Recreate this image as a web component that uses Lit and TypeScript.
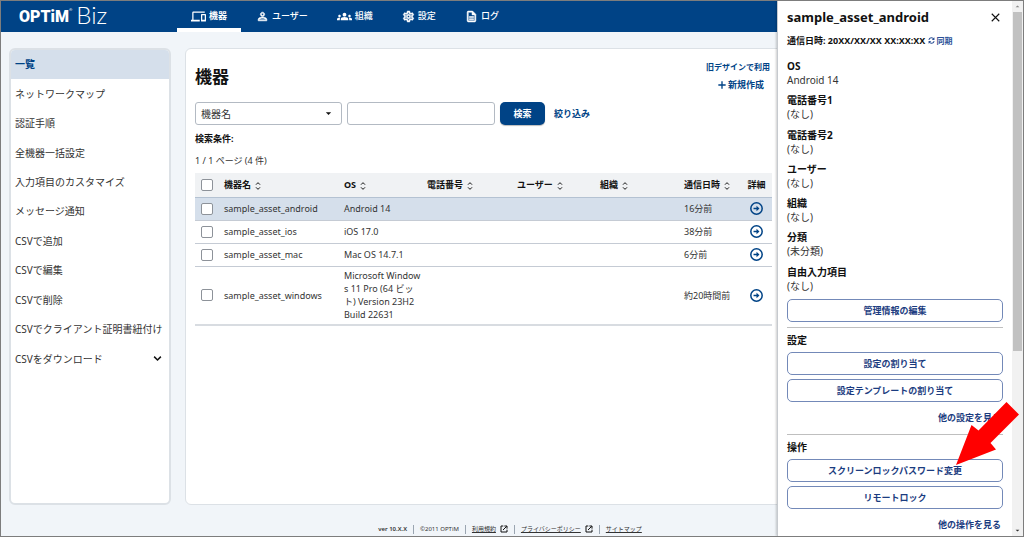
import { LitElement, html, css, svg } from "lit";
import { customElement, property } from "lit/decorators.js";
import { classMap } from "lit/directives/class-map.js";

const icons: Record<string, unknown> = {
  devices: svg`<path d="M4 6h18V4H4c-1.100 0-2 .9-2 2v11H0v3h14v-3H4V6zm19 2h-6c-.55 0-1 .45-1 1v10c0 .55.45 1 1 1h6c.55 0 1-.45 1-1V9c0-.55-.45-1-1-1zm-1 9h-4v-7h4v7z"/>`,
  person: svg`<path d="M12 6c1.100 0 2 .9 2 2s-.9 2-2 2-2-.9-2-2 .9-2 2-2m0 9c2.700 0 5.800 1.290 6 2v1H6v-.99c.2-.72 3.300-2.010 6-2.010m0-11C9.790 4 8 5.790 8 8s1.790 4 4 4 4-1.790 4-4-1.790-4-4-4zm0 9c-2.670 0-8 1.340-8 4v3h16v-3c0-2.660-5.330-4-8-4z" stroke="currentColor"/>`,
  groups: svg`<path d="M12 12.750c1.630 0 3.070.39 4.240.9 1.080.48 1.760 1.560 1.760 2.730V18H6v-1.610c0-1.180.68-2.260 1.760-2.730 1.170-.52 2.610-.91 4.240-.91zM4 13c1.100 0 2-.9 2-2s-.9-2-2-2-2 .9-2 2 .9 2 2 2zm1.130 1.100C4.760 14.040 4.390 14 4 14c-.99 0-1.930.21-2.780.58C.48 14.900 0 15.620 0 16.430V18h4.500v-1.610c0-.83.23-1.610.63-2.290zM20 13c1.100 0 2-.9 2-2s-.9-2-2-2-2 .9-2 2 .9 2 2 2zm4 3.430c0-.81-.48-1.530-1.220-1.850C21.930 14.210 20.990 14 20 14c-.39 0-.76.04-1.130.1.4.68.63 1.460.63 2.290V18H24v-1.570zM12 6c1.660 0 3 1.340 3 3s-1.340 3-3 3-3-1.340-3-3 1.340-3 3-3z"/>`,
  settings: svg`<path d="M19.430 12.980c.04-.32.07-.64.07-.98s-.03-.66-.07-.98l2.110-1.650c.19-.15.24-.42.12-.64l-2-3.460c-.09-.16-.26-.25-.44-.25-.06 0-.12.01-.17.03l-2.490 1c-.52-.4-1.080-.73-1.690-.98l-.38-2.650C14.460 2.180 14.250 2 14 2h-4c-.25 0-.46.18-.49.42l-.38 2.650c-.61.25-1.170.59-1.690.98l-2.490-1c-.06-.02-.12-.03-.18-.03-.17 0-.34.09-.43.25l-2 3.460c-.13.22-.07.49.12.64l2.110 1.650c-.04.32-.07.65-.07.98s.03.66.07.98l-2.110 1.650c-.19.15-.24.42-.12.64l2 3.460c.09.16.26.25.44.25.06 0 .12-.01.17-.03l2.490-1c.52.4 1.080.73 1.690.98l.38 2.650c.03.24.24.42.49.42h4c.25 0 .46-.18.49-.42l.38-2.650c.61-.25 1.170-.59 1.690-.98l2.490 1c.06.02.12.03.18.03.17 0 .34-.09.43-.25l2-3.460c.12-.22.07-.49-.12-.64l-2.110-1.650zm-1.980-1.710c.04.31.05.52.05.73 0 .21-.02.43-.05.73l-.14 1.130.89.7 1.080.84-.7 1.210-1.270-.51-1.040-.42-.9.68c-.43.32-.84.56-1.250.73l-1.060.43-.16 1.130-.2 1.350h-1.400l-.19-1.350-.16-1.130-1.060-.43c-.43-.18-.83-.41-1.230-.71l-.91-.7-1.060.43-1.270.51-.7-1.210 1.080-.84.89-.7-.14-1.130c-.03-.31-.05-.54-.05-.74s.02-.43.05-.73l.14-1.130-.89-.7-1.080-.84.7-1.210 1.270.51 1.040.42.9-.68c.43-.32.84-.56 1.250-.73l1.060-.43.16-1.130.2-1.350h1.390l.19 1.350.16 1.130 1.060.43c.43.18.83.41 1.230.71l.91.7 1.060-.43 1.270-.51.7 1.210-1.070.85-.89.7.14 1.130zM12 8c-2.210 0-4 1.790-4 4s1.790 4 4 4 4-1.790 4-4-1.790-4-4-4zm0 6c-1.100 0-2-.9-2-2s.9-2 2-2 2 .9 2 2-.9 2-2 2z" stroke="currentColor"/>`,
  log: svg`<path d="M8 16h8v2H8zm0-4h8v2H8zm6-10H6c-1.100 0-2 .9-2 2v16c0 1.100.89 2 1.990 2H18c1.100 0 2-.9 2-2V8l-6-6zm4 18H6V4h7v5h5v11z" stroke="currentColor"/>`,
  sort: svg`<path d="M6 8l6-6 6 6M6 16l6 6 6-6" fill="none" stroke="currentColor" stroke-width="3"/>`,
  detail: svg`<circle cx="12" cy="12" r="10.500" fill="none" stroke="currentColor" stroke-width="2.800"/><path d="M6.500 10.500H12V7l5.500 5-5.500 5v-3.500H6.500z"/>`,
  chevron: svg`<path d="M3 7l9 9 9-9" fill="none" stroke="currentColor" stroke-width="4"/>`,
  plus: svg`<path d="M12 1v22M1 12h22" fill="none" stroke="currentColor" stroke-width="4"/>`,
  close: svg`<path d="M2 2l20 20M22 2L2 22" fill="none" stroke="currentColor" stroke-width="3"/>`,
  sync: svg`<path d="M3 10a9 9 0 0 1 17-2M21 14a9 9 0 0 1-17 2" fill="none" stroke="currentColor" stroke-width="3.500"/><path d="M22 1v9h-9zM2 23v-9h9z"/>`,
  external: svg`<path d="M10 3H3v18h18v-7M13 3h8v8M20 4L9 15" fill="none" stroke="currentColor" stroke-width="3"/>`,
  caret: svg`<path d="M3 8h18l-9 9z"/>`,
};

@customElement("ui-icon")
class UiIcon extends LitElement {
  @property() name = "";
  static styles = css`
    :host { display: inline-flex; flex: none; width: 12px; height: 12px; }
    svg { width: 100%; height: 100%; fill: currentColor; }
  `;
  render() {
    return html`<svg viewBox="0 0 24 24" aria-hidden="true">${icons[this.name]}</svg>`;
  }
}

const nav = [
  { icon: "devices", label: "機器", wide: true },
  { icon: "person", label: "ユーザー" },
  { icon: "groups", label: "組織", wide: true },
  { icon: "settings", label: "設定" },
  { icon: "log", label: "ログ" },
];

const menu = [
  "一覧", "ネットワークマップ", "認証手順", "全機器一括設定", "入力項目のカスタマイズ", "メッセージ通知",
  "CSVで追加", "CSVで編集", "CSVで削除", "CSVでクライアント証明書紐付け", "CSVをダウンロード",
];

const columns = ["機器名", "OS", "電話番号", "ユーザー", "組織", "通信日時"];

const assets = [
  { name: "sample_asset_android", os: "Android 14", seen: "16分前" },
  { name: "sample_asset_ios", os: "iOS 17.0", seen: "38分前" },
  { name: "sample_asset_mac", os: "Mac OS 14.7.1", seen: "6分前" },
  { name: "sample_asset_windows", os: "Microsoft Window\ns 11 Pro (64 ビッ\nト) Version 23H2\nBuild 22631", seen: "約20時間前" },
];

const details = [
  ["OS", "Android 14"], ["電話番号1", "(なし)"], ["電話番号2", "(なし)"], ["ユーザー", "(なし)"],
  ["組織", "(なし)"], ["分類", "(未分類)"], ["自由入力項目", "(なし)"],
];

@customElement("app-root")
class AppRoot extends LitElement {
  static styles = css`
    :host {
      display: block;
      --blue: #004386;
      --line: #dce1e6;
      font: 9px/12px "Noto Sans", "Noto Sans CJK JP", sans-serif;
      color: #333;
    }
    * { box-sizing: border-box; }
    h1, h2, h3, p, ul, dl, dd { margin: 0; padding: 0; }
    ul { list-style: none; }
    a { color: inherit; text-decoration: none; }
    button, input, select { font: inherit; color: inherit; margin: 0; }
    button { cursor: pointer; }
    .page {
      position: relative;
      display: flex;
      flex-direction: column;
      min-height: 100vh;
      border: 1px solid #7d7d7d;
      background: #f1f5f9;
      overflow: hidden;
    }
    header { display: flex; height: 31px; padding-left: 18px; background: var(--blue); color: #fff; }
    .logo { display: flex; align-items: flex-start; width: 158px; }
    .brand { font: 900 16px/31px Roboto, sans-serif; }
    .reg { padding-top: 6px; font-size: 4px; line-height: 6px; }
    .product { padding-left: 4px; font: 300 24px/28px Lato, sans-serif; }
    .tabs { display: flex; gap: 1px; }
    .tab { display: flex; align-items: center; gap: 3px; padding: 3px 14px 0; border-bottom: 4px solid transparent; font-weight: 500; }
    .tab.active { border-color: #fff; font-weight: 700; }
    .tab ui-icon { width: 13px; height: 13px; }
    .tab ui-icon.wide { width: 15px; height: 15px; }
    .body { flex: 1; display: flex; gap: 14px; padding: 16px 8px 0; }
    .side, .card { background: #fff; border: 2px solid var(--line); border-radius: 6px; }
    .side { width: 162px; overflow: hidden; }
    .side ul { display: grid; grid-auto-rows: 1fr; height: 324px; }
    .side a { display: flex; align-items: center; justify-content: space-between; height: 100%; padding: 0 9px 1px 4px; font-size: 10px; white-space: nowrap; }
    .side .active { background: #d5dfeb; color: var(--blue); font-weight: 700; }
    .side ui-icon { width: 9px; height: 9px; color: #111; }
    .card { flex: 1; min-width: 0; border-width: 1px; padding: 12px 242px 40px 9px; }
    .top { display: flex; justify-content: space-between; align-items: flex-start; }
    h1 { padding-top: 4px; font-size: 17px; line-height: 24px; color: #111; }
    .links { display: flex; flex-direction: column; align-items: flex-end; gap: 6px; color: var(--blue); font-weight: 700; line-height: 12px; }
    .links a { display: flex; align-items: center; gap: 2px; }
    .links .old { font-size: 8px; padding-right: 2px; }
    .links .new { padding-right: 8px; }
    .links ui-icon { width: 8px; height: 8px; }
    .search { display: flex; align-items: center; gap: 5px; padding-top: 11px; }
    .pick { position: relative; display: flex; width: 147px; }
    .pick ui-icon { position: absolute; right: 10px; top: 8px; width: 7px; height: 7px; color: #111; pointer-events: none; }
    select, .query { width: 148px; height: 23px; border: 1px solid #b3bac3; border-radius: 3px; background: #fff; padding: 0 5px; appearance: none; font-size: 10px; outline: none; }
    .go { width: 45px; height: 23px; border: 0; border-radius: 5px; background: var(--blue); color: #fff; font-weight: 700; box-shadow: 0 1px 1px #0004; padding: 0; }
    .refine { padding-left: 4px; color: var(--blue); font-weight: 700; }
    .cond { padding-top: 8px; font-weight: 700; color: #111; }
    .count { padding: 10px 0 6px; }
    table { width: 100%; border-collapse: collapse; table-layout: fixed; }
    th { height: 24px; padding: 0; background: #f0f2f4; color: #111; text-align: left; white-space: nowrap; }
    th ui-icon { width: 8px; height: 8px; margin-left: 3px; vertical-align: -2px; }
    td { height: 23px; padding: 3px 0; border-top: 1px solid #c5cbd4; line-height: 13px; vertical-align: middle; }
    tbody tr:last-child td { height: 59px; border-bottom: 2px solid #d8dce1; }
    .on td { background: #d5dfeb; border-color: #b4c2d2; }
    td.os { white-space: pre-line; }
    th.mark, td.mark { text-align: center; padding-right: 5px; }
    th.more, td.more { text-align: center; }
    td.mark, td.more, tbody tr:last-child td { padding-top: 0; padding-bottom: 0; }
    .more a { display: flex; justify-content: center; color: var(--blue); }
    .more ui-icon { width: 13px; height: 13px; }
    input[type="checkbox"] { appearance: none; display: block; width: 12px; height: 12px; margin: 0 auto; border: 1px solid #8d9299; border-radius: 2px; background: #fff; }
    input[type="checkbox"]:checked { background: var(--blue); }
    .c1 { width: 29px; } .c2 { width: 120px; } .c3 { width: 83px; } .c4 { width: 90px; }
    .c5 { width: 83px; } .c6 { width: 84px; } .c8 { width: 31px; }
    footer { display: flex; align-items: center; justify-content: center; height: 31px; padding: 17px 4px 0 0; font-size: 6px; line-height: 9px; }
    footer > * { display: flex; align-items: center; gap: 4px; padding: 0 6px; }
    footer > * + * { border-left: 1px solid #9aa5b1; }
    footer a span { text-decoration: underline; }
    footer ui-icon { width: 8px; height: 8px; color: #111; }
    .ver { font-weight: 600; }
    aside { position: absolute; top: 0; right: 0; bottom: 0; width: 246px; display: flex; background: #fff; border-left: 1px solid #c6cacf; box-shadow: -1px 0 2px #0003; }
    .panel { flex: 1; padding: 7px 9px 0 9px; }
    .head { display: flex; align-items: center; justify-content: space-between; }
    h2 { font-size: 13px; line-height: 18px; color: #111; }
    .x { display: flex; border: 0; padding: 3px; background: none; color: #111; }
    .x ui-icon { width: 9px; height: 9px; }
    .when { display: flex; align-items: center; gap: 3px; padding: 8px 0 12px; font-weight: 700; color: #111; line-height: 13px; white-space: nowrap; }
    .when a { display: flex; align-items: center; gap: 1px; font-size: 8px; color: #2a4f96; }
    .when ui-icon { width: 7px; height: 7px; }
    dl { display: grid; grid-auto-rows: 1fr; height: 240px; font-size: 10px; line-height: 14px; }
    dt, h3 { font-size: 10px; line-height: 14px; font-weight: 700; color: #111; }
    .buttons { display: flex; flex-direction: column; gap: 4px; }
    .buttons button { height: 23px; border: 1px solid #7389b8; border-radius: 5px; background: #fff; color: #1b3c80; font-weight: 700; padding: 0; }
    section { position: relative; margin-top: 5px; border-top: 1px solid #bfbfbf; padding-top: 5px; }
    h3 { padding-bottom: 5px; }
    .all { display: block; padding: 10px 2px 5px 0; text-align: right; color: #1b3c80; font-weight: 700; }
    .pointer { position: absolute; right: -16px; top: -33px; width: 63px; height: 64px; fill: #f00; pointer-events: none; }
    .scroll { display: flex; flex-direction: column; width: 11px; background: #f1f1f1; }
    .scroll ui-icon { width: 5px; height: 11px; margin: 0 auto; color: #333; }
    .scroll .up { transform: rotate(180deg); color: #888; }
    .rail { flex: 1; }
    .thumb { height: 66%; margin: 0 1px; background: #c1c1c1; }
  `;

  render() {
    return html`
      <div class="page">
        <header>
          <div class="logo"><span class="brand">OPTiM</span><span class="reg">®</span><span class="product">Biz</span></div>
          <nav class="tabs">
            ${nav.map((n, i) => html`<a href="#" class=${classMap({ tab: true, active: i === 0 })}>
              <ui-icon class=${classMap({ wide: !!n.wide })} name=${n.icon}></ui-icon><span>${n.label}</span></a>`)}
          </nav>
        </header>
        <div class="body">
          <nav class="side"><ul>
            ${menu.map((m, i) => html`<li><a href="#" class=${classMap({ active: i === 0 })}>${m}${i === menu.length - 1 ? html`<ui-icon name="chevron"></ui-icon>` : ""}</a></li>`)}
          </ul></nav>
          <main class="card">
            <div class="top">
              <h1>機器</h1>
              <div class="links">
                <a class="old" href="#">旧デザインで利用</a>
                <a class="new" href="#"><ui-icon name="plus"></ui-icon>新規作成</a>
              </div>
            </div>
            <form class="search" @submit=${(e: Event) => e.preventDefault()}>
              <div class="pick">
                <select aria-label="検索項目"><option>機器名</option></select>
                <ui-icon name="caret"></ui-icon>
              </div>
              <input class="query" type="text" aria-label="検索語">
              <button class="go">検索</button>
              <a class="refine" href="#">絞り込み</a>
            </form>
            <p class="cond">検索条件:</p>
            <p class="count">1 / 1 ページ (4 件)</p>
            <table>
              <colgroup><col class="c1"><col class="c2"><col class="c3"><col class="c4"><col class="c5"><col class="c6"><col><col class="c8"></colgroup>
              <thead><tr>
                <th class="mark"><input type="checkbox" aria-label="すべて選択"></th>
                ${columns.map((c) => html`<th>${c}<ui-icon name="sort"></ui-icon></th>`)}
                <th class="more">詳細</th>
              </tr></thead>
              <tbody>
                ${assets.map((a, i) => html`<tr class=${classMap({ on: i === 0 })}>
                  <td class="mark"><input type="checkbox" aria-label=${a.name}></td>
                  <td>${a.name}</td><td class="os">${a.os}</td><td></td><td></td><td></td><td>${a.seen}</td>
                  <td class="more"><a href="#" aria-label="詳細"><ui-icon name="detail"></ui-icon></a></td>
                </tr>`)}
              </tbody>
            </table>
          </main>
        </div>
        <footer>
          <span class="ver">ver 10.X.X</span>
          <span>©2011 OPTiM</span>
          <a href="#"><span>利用規約</span><ui-icon name="external"></ui-icon></a>
          <a href="#"><span>プライバシーポリシー</span><ui-icon name="external"></ui-icon></a>
          <a href="#"><span>サイトマップ</span></a>
        </footer>
        <aside>
          <div class="panel">
            <div class="head"><h2>sample_asset_android</h2><button class="x" aria-label="閉じる"><ui-icon name="close"></ui-icon></button></div>
            <p class="when">通信日時: 20XX/XX/XX XX:XX:XX <a href="#"><ui-icon name="sync"></ui-icon>同期</a></p>
            <dl>${details.map(([k, v]) => html`<div><dt>${k}</dt><dd>${v}</dd></div>`)}</dl>
            <div class="buttons"><button>管理情報の編集</button></div>
            <section>
              <h3>設定</h3>
              <div class="buttons"><button>設定の割り当て</button><button>設定テンプレートの割り当て</button></div>
              <a class="all" href="#">他の設定を見る</a>
            </section>
            <section>
              <h3>操作</h3>
              <div class="buttons"><button>スクリーンロックパスワード変更</button><button>リモートロック</button></div>
              <a class="all" href="#">他の操作を見る</a>
              <svg class="pointer" viewBox="0 0 63 64" aria-hidden="true"><path d="M0 63L15.500 23l7 5.500L50.500 0 63 12.500 34.500 41l5.500 6.500z"/></svg>
            </section>
          </div>
          <div class="scroll"><ui-icon class="up" name="caret"></ui-icon><div class="rail"><div class="thumb"></div></div><ui-icon name="caret"></ui-icon></div>
        </aside>
      </div>`;
  }
}
